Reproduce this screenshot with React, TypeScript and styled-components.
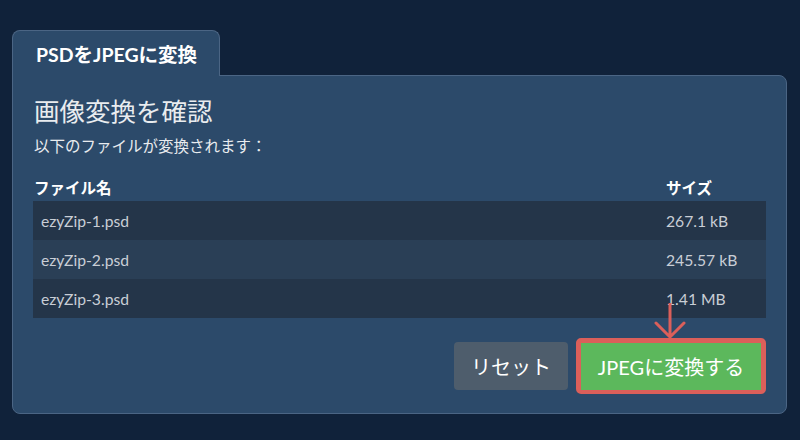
import React from "react";
import styled, { createGlobalStyle } from "styled-components";

const Global = createGlobalStyle`
  html, body { margin: 0; padding: 0; background: #10223a; }
  body { font-family: Lato, "Noto Sans CJK JP", sans-serif; }
`;

const Page = styled.div`
  width: 800px;
  height: 440px;
  box-sizing: border-box;
  padding: 30px 13px 0 12px;
  background: #10223a;
`;

const Tab = styled.div`
  position: relative;
  z-index: 1;
  width: 208px;
  height: 46px;
  box-sizing: border-box;
  margin-bottom: -1px;
  padding: 0 0 0 23px;
  display: flex;
  align-items: center;
  background: #2c4a6a;
  border: 1px solid #4b6584;
  border-bottom: none;
  border-radius: 8px 8px 0 0;
  color: #ffffff;
  font-weight: 700;
  font-size: 19.5px;
  white-space: nowrap;
`;

const Panel = styled.div`
  height: 339px;
  box-sizing: border-box;
  padding: 18px 20px 0 20px;
  background: #2c4a6a;
  border: 1px solid #4b6584;
  border-radius: 0 8px 8px 8px;
  display: flex;
  flex-direction: column;
`;

const Title = styled.h2`
  margin: 0 0 0 1px;
  font-weight: 400;
  font-size: 25.5px;
  line-height: 34px;
  color: #e9ecef;
`;

const Subtitle = styled.p`
  margin: 7px 0 0 1px;
  font-size: 15.5px;
  line-height: 22px;
  color: #e9ecef;
`;

const Table = styled.div`
  margin-top: 18px;
  display: flex;
  flex-direction: column;
`;

const Row = styled.div<{ $head?: boolean; $alt?: boolean }>`
  display: grid;
  grid-template-columns: 1fr 108px;
  align-items: center;
  height: ${(p) => (p.$head ? "26px" : "39px")};
  padding-bottom: ${(p) => (p.$head ? "2px" : "0")};
  box-sizing: border-box;
  background: ${(p) => (p.$head ? "transparent" : p.$alt ? "#2a3f56" : "#243549")};
  color: ${(p) => (p.$head ? "#ffffff" : "#c9ced6")};
  font-weight: ${(p) => (p.$head ? 700 : 400)};
  font-size: ${(p) => (p.$head ? "15.5px" : "15.7px")};
`;

const Cell = styled.div<{ $head?: boolean; $first?: boolean }>`
  padding-left: ${(p) => (p.$first ? (p.$head ? "1px" : "8px") : "8px")};
  white-space: nowrap;
`;

const Actions = styled.div`
  margin-top: 20px;
  display: flex;
  justify-content: flex-end;
  align-items: center;
  gap: 8px;
`;

const ResetButton = styled.button`
  width: 114px;
  height: 48px;
  border: none;
  border-radius: 4px;
  background: #4e5d6c;
  color: #ffffff;
  font-family: Lato, "Noto Sans CJK JP", sans-serif;
  font-size: 20px;
  padding: 0;
`;

const ConvertWrap = styled.div`
  position: relative;
  width: 190px;
  height: 56px;
  box-sizing: border-box;
  border: 5px solid #db5f5a;
  border-bottom-width: 4px;
  border-radius: 5px;
  background: #5cb85c;
  display: flex;
`;

const ConvertButton = styled.button`
  flex: 1;
  border: none;
  background: #5cb85c;
  color: #ffffff;
  font-family: Lato, "Noto Sans CJK JP", sans-serif;
  font-size: 20px;
  padding: 0;
  white-space: nowrap;
`;

const Arrow = styled.svg`
  position: absolute;
  left: 50%;
  bottom: calc(100% + 4px);
  transform: translateX(-50%);
  margin-left: -1px;
`;

const files = [
  { name: "ezyZip-1.psd", size: "267.1 kB" },
  { name: "ezyZip-2.psd", size: "245.57 kB" },
  { name: "ezyZip-3.psd", size: "1.41 MB" },
];

export default function App() {
  return (
    <>
      <Global />
      <Page>
        <Tab>PSDをJPEGに変換</Tab>
        <Panel>
          <Title>画像変換を確認</Title>
          <Subtitle>以下のファイルが変換されます：</Subtitle>
          <Table>
            <Row $head>
              <Cell $head $first>ファイル名</Cell>
              <Cell $head>サイズ</Cell>
            </Row>
            {files.map((f, i) => (
              <Row key={f.name} $alt={i % 2 === 1}>
                <Cell $first>{f.name}</Cell>
                <Cell>{f.size}</Cell>
              </Row>
            ))}
          </Table>
          <Actions>
            <ResetButton>リセット</ResetButton>
            <ConvertWrap>
              <Arrow width="34" height="36" viewBox="0 0 34 36">
                <path
                  d="M17 1 V34 M3 20 L17 34 L31 20"
                  fill="none"
                  stroke="#db5f5a"
                  strokeWidth="3"
                  strokeLinecap="round"
                  strokeLinejoin="round"
                />
              </Arrow>
              <ConvertButton>JPEGに変換する</ConvertButton>
            </ConvertWrap>
          </Actions>
        </Panel>
      </Page>
    </>
  );
}
